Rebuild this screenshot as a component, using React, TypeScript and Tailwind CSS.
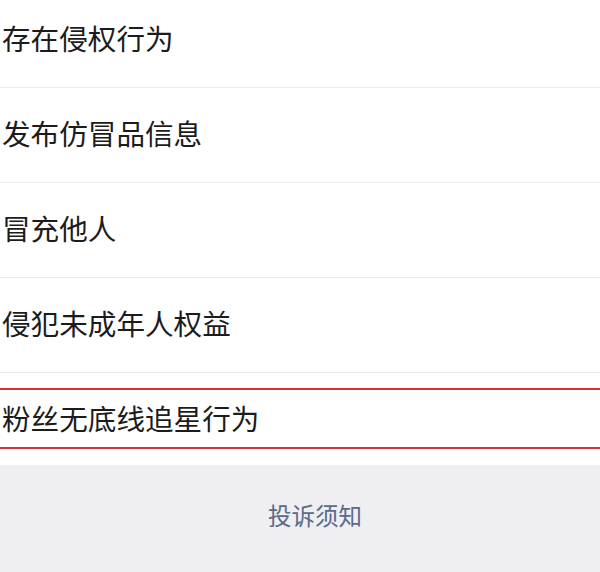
import React from "react";

const items = ["存在侵权行为", "发布仿冒品信息", "冒充他人", "侵犯未成年人权益"];

export default function App() {
  const font = {
    fontFamily: '"Noto Sans CJK SC", "Noto Sans", sans-serif',
  };
  return (
    <div
      className="w-[600px] h-[572px] overflow-hidden bg-white flex flex-col"
      style={font}
    >
      <div className="-mt-[7px] flex flex-col">
        {items.map((t) => (
          <div
            key={t}
            className="h-[95px] border-b border-[#ececec] flex items-center pl-[2px] pb-[4px] text-[28.6px] text-[#1c1c1c]"
          >
            {t}
          </div>
        ))}
        <div className="relative h-[92px] flex items-center pl-[2px] pb-[2px] text-[28.6px] text-[#1c1c1c]">
          粉丝无底线追星行为
          <div className="absolute -left-[4px] -right-[4px] top-[15px] h-[61px] border-2 border-[#cf3535]" />
        </div>
      </div>
      <div className="flex-1 bg-[#efeff1] flex items-center justify-center pl-[30px] pb-[6px] text-[23.5px] text-[#5a6a8a]">
        投诉须知
      </div>
    </div>
  );
}
